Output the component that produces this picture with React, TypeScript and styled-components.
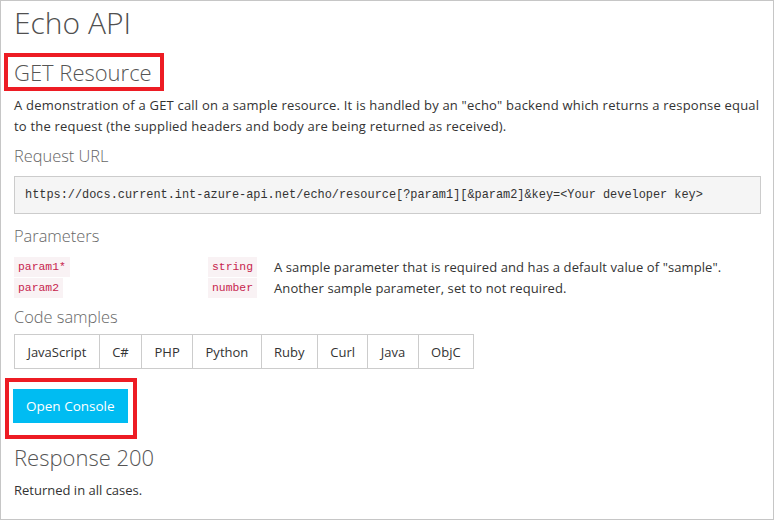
import React from 'react';
import styled, {createGlobalStyle} from 'styled-components';

const GlobalStyle = createGlobalStyle`
    html, body {
        margin: 0;
        padding: 0;
        background: #ffffff;
    }
`

const Page = styled.div`
    box-sizing: border-box;
    width: 774px;
    height: 520px;
    padding: 4px 12px 0 13px;
    border: 1px solid #c6c6c6;
    overflow: hidden;

    font-family: "Open Sans", "Noto Sans", sans-serif;
    color: #333333;
`

const Title = styled.h1`
    margin: 0;
    font-size: 30px;
    font-weight: 300;
    line-height: 36px;
    color: #505050;
`

const Highlight = styled.div<{$pad: string, $shift: number}>`
    display: inline-block;
    margin-left: ${props => props.$shift}px;
    padding: ${props => props.$pad};
    border: 4px solid #ed1c24;
`

const OperationTitle = styled.h2`
    margin: 0;
    font-size: 22px;
    font-weight: 300;
    line-height: 30px;
    color: #555555;
`

const Description = styled.p`
    margin: 4px 0 0 0;
    font-size: 13px;
    letter-spacing: 0.2px;
    line-height: 21px;
`

const SectionTitle = styled.h3<{$top: number}>`
    margin: ${props => props.$top}px 0 0 0;
    font-size: 16.4px;
    font-weight: 300;
    line-height: 24px;
    color: #666666;
`

const UrlBox = styled.div`
    margin-top: 8px;
    height: 38px;
    display: flex;
    align-items: center;
    padding-left: 10px;

    background-color: #f5f5f5;
    border: 1px solid #cccccc;
    box-sizing: border-box;

    font-family: "Liberation Mono", monospace;
    font-size: 11.9px;
    color: #333333;
`

const ParamGrid = styled.div`
    margin-top: 9px;
    display: grid;
    grid-template-columns: 194px 66px 1fr;
    row-gap: 1px;
    align-items: center;
    font-size: 13px;
    letter-spacing: 0.1px;
`

const Chip = styled.code`
    justify-self: start;
    padding: 1px 4px;
    background-color: #f9f2f4;
    color: #c7254e;
    font-family: "Liberation Mono", monospace;
    font-size: 11.4px;
    letter-spacing: 0;
    line-height: 18px;
`

const ParamText = styled.span`
    line-height: 20px;
`

const Tabs = styled.div`
    margin-top: 5px;
    display: inline-flex;
    border: 1px solid #cccccc;
`

const Tab = styled.div`
    height: 33px;
    padding: 0 12.4px;
    display: flex;
    align-items: center;
    border-left: 1px solid #cccccc;
    font-size: 13px;
    color: #333333;

    &:first-child {
        border-left: none;
    }
`

const ButtonRow = styled.div`
    margin-top: 9px;
    line-height: 0;
`

const ConsoleButton = styled.button`
    display: block;
    height: 34px;
    padding: 0 13px;
    border: none;
    background-color: #00bcf2;
    color: #ffffff;
    font-family: "Open Sans", "Noto Sans", sans-serif;
    font-size: 13.5px;
    cursor: pointer;
`

const ResponseTitle = styled(OperationTitle)`
    margin-top: 3px;
`

const Small = styled.p`
    margin: 8px 0 0 0;
    font-size: 13px;
    line-height: 20px;
`

const params = [
    {name: 'param1*', type: 'string', text: 'A sample parameter that is required and has a default value of "sample".'},
    {name: 'param2', type: 'number', text: 'Another sample parameter, set to not required.'},
];

const samples = ['JavaScript', 'C#', 'PHP', 'Python', 'Ruby', 'Curl', 'Java', 'ObjC'];

function App() {
    return (
        <>
            <GlobalStyle/>
            <Page>
                <Title>Echo API</Title>
                <Highlight $pad="0 8px 0 6px" $shift={-10} style={{marginTop: 12}}>
                    <OperationTitle>GET Resource</OperationTitle>
                </Highlight>
                <Description>
                    A demonstration of a GET call on a sample resource. It is handled by an "echo" backend which returns a response equal
                    to the request (the supplied headers and body are being returned as received).
                </Description>

                <SectionTitle $top={7}>Request URL</SectionTitle>
                <UrlBox>
                    https://docs.current.int-azure-api.net/echo/resource[?param1][&amp;param2]&amp;key=&lt;Your developer key&gt;
                </UrlBox>

                <SectionTitle $top={10}>Parameters</SectionTitle>
                <ParamGrid>
                    {params.map(p => (
                        <React.Fragment key={p.name}>
                            <Chip>{p.name}</Chip>
                            <Chip>{p.type}</Chip>
                            <ParamText>{p.text}</ParamText>
                        </React.Fragment>
                    ))}
                </ParamGrid>

                <SectionTitle $top={7}>Code samples</SectionTitle>
                <Tabs>
                    {samples.map(s => <Tab key={s}>{s}</Tab>)}
                </Tabs>

                <ButtonRow>
                    <Highlight $pad="7px 5px 12px 4px" $shift={-9}>
                        <ConsoleButton>Open Console</ConsoleButton>
                    </Highlight>
                </ButtonRow>

                <ResponseTitle>Response 200</ResponseTitle>
                <Small>Returned in all cases.</Small>
            </Page>
        </>
    );
}

export default App;
